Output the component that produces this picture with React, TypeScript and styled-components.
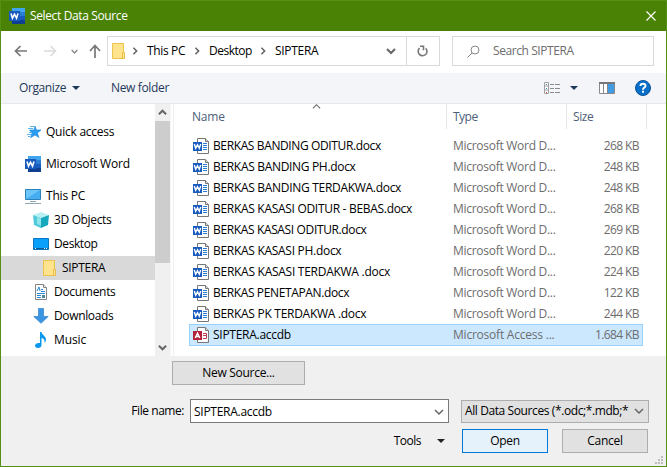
import React from "react";
import styled, { createGlobalStyle } from "styled-components";

const Global = createGlobalStyle`
  * { box-sizing: border-box; }
  html, body { margin: 0; padding: 0; overflow: hidden; }
  body { font: 12px/16px "Open Sans", "Noto Sans", sans-serif; color: #000; }
  svg { display: block; flex: none; }
`;

const Window = styled.div`
  width: 667px; height: 467px; display: flex; flex-direction: column;
  border: 1px solid #548f16; background: #fff; overflow: hidden;
`;
const TitleBar = styled.header`
  height: 30px; flex: none; display: flex; align-items: center; padding: 0 10px 0 8px;
  background: #4a8206; color: #fff;
`;
const Text = styled.span<{ $ls?: number; $x?: number }>`
  white-space: pre; letter-spacing: ${(p) => p.$ls ?? -0.3}px; margin-left: ${(p) => p.$x ?? 0}px;
`;
const Spacer = styled.div`flex: 1;`;
const NavBar = styled.div`
  height: 42px; flex: none; display: flex; align-items: center; padding: 0 12px 2px 13px;
`;
const NavArrows = styled.div`display: flex; align-items: center; width: 93px;`;
const AddressBox = styled.div`
  width: 333px; height: 30px; border: 1px solid #d9d9d9; display: flex; align-items: center; padding-left: 4px;
`;
const Crumb = styled.div<{ $w: number }>`
  display: flex; align-items: center; width: ${(p) => p.$w}px; flex: none;
`;
const Refresh = styled.div`
  width: 33px; height: 28px; border-left: 1px solid #d9d9d9; display: flex; align-items: center; justify-content: center;
`;
const SearchBox = styled.div`
  width: 202px; height: 30px; margin-left: 12px; border: 1px solid #d9d9d9; color: #6d6d6d;
  display: flex; align-items: center; padding-left: 14px;
`;
const Toolbar = styled.div`
  height: 31px; flex: none; display: flex; align-items: center; padding: 0 15px 0 18px;
  background: #f4f5f8; border-bottom: 1px solid #e8e8e9; color: #1e395b;
`;
const Main = styled.div`height: 252px; flex: none; display: flex;`;
const Tree = styled.nav`width: 154px; padding-top: 16px;`;
const TreeRow = styled.div<{ $indent: number; $gap?: number; $selected?: boolean }>`
  height: 24px; margin-bottom: ${(p) => p.$gap ?? 0}px; padding-left: ${(p) => p.$indent}px;
  display: flex; align-items: center; background: ${(p) => (p.$selected ? "#d9d9d9" : "transparent")};
`;
const ScrollBar = styled.div`
  width: 16px; background: #f0f0f0; display: flex; flex-direction: column; align-items: center;
  border-right: 1px solid #f6f6f6;
`;
const Thumb = styled.div`width: 15px; height: 142px; background: #cdcdcd;`;
const ScrollButton = styled.div`
  width: 15px; height: 17px; display: flex; align-items: center; justify-content: center;
`;
const List = styled.section`flex: 1; margin-left: 2px; border-left: 1px solid #f0f0f0; position: relative;`;
const ListHeader = styled.div`
  height: 25px; display: flex; color: #4c607a; padding-left: 15px;
`;
const HeadCell = styled.div<{ $w: number; $pad: number }>`
  width: ${(p) => p.$w}px; padding: 1px 0 0 ${(p) => p.$pad}px; border-right: 1px solid #e5e5e5;
  display: flex; align-items: center;
`;
const SortMark = styled.div`position: absolute; left: 138px; top: -2px;`;
const Rows = styled.div`padding: 6px 0 0 15px;`;
const FileRow = styled.div<{ $selected?: boolean }>`
  width: 454px; height: ${(p) => (p.$selected ? 22 : 21)}px; display: flex; align-items: center;
  border: 1px solid ${(p) => (p.$selected ? "#99d1ff" : "transparent")};
  background: ${(p) => (p.$selected ? "#cce8ff" : "transparent")}; padding-left: 3px;
`;
const NameCell = styled.div`width: 260px; display: flex; align-items: center;`;
const TypeCell = styled.div`width: 113px; color: #6d6d6d; display: flex;`;
const SizeCell = styled.div`width: 73px; color: #6d6d6d; display: flex; justify-content: flex-end;`;
const Footer = styled.footer`
  flex: 1; background: #f0f0f0; display: flex; flex-direction: column; padding: 5px 17px 0 0; position: relative;
`;
const Line = styled.div<{ $mt?: number }>`
  display: flex; align-items: center; justify-content: flex-end; margin-top: ${(p) => p.$mt ?? 0}px;
`;
const Button = styled.button<{ $w: number; $primary?: boolean }>`
  width: ${(p) => p.$w}px; height: 24px; padding: 0; font: inherit; color: #000; border-radius: 0;
  display: flex; align-items: center; justify-content: center;
  border: 1px solid ${(p) => (p.$primary ? "#0078d7" : "#adadad")};
  background: ${(p) => (p.$primary ? "#e5f1fb" : "#e1e1e1")};
`;
const NameField = styled.div`
  width: 259px; height: 24px; border: 1px solid #7a7a7a; background: #fff;
  display: flex; align-items: center; justify-content: space-between; padding: 1px 4px 0 3px; margin: 0 12px 0 6px;
`;
const TypeSelect = styled.div`
  width: 188px; height: 23px; border: 1px solid #adadad; background: #e1e1e1;
  display: flex; align-items: center; justify-content: space-between; padding: 0 4px 0 3px;
`;
const Grip = styled.div`position: absolute; right: 3px; bottom: 2px;`;

const WordIcon = () => (
  <svg width="16" height="16" viewBox="0 0 16 16">
    <path d="M3 0h13v4H3z" fill="#41a5ee" /><path d="M3 4h13v4H3z" fill="#2b7cd3" />
    <path d="M3 8h13v4H3z" fill="#185abd" /><path d="M3 12h13v4H3z" fill="#103f91" />
    <path d="M0 3h11v10H0z" fill="#185abd" />
    <path d="M2 5.500l1.500 4.700 2-4 2 4L9 5.500" fill="none" stroke="#fff" strokeWidth="1.600" />
  </svg>
);
const FolderIcon = () => (
  <svg width="13" height="16" viewBox="0 0 13 16">
    <path d="M.5.5h11v15H.5z" fill="#ffe48d" stroke="#ecc34c" />
    <path d="M10.500 9.500h2v6h-2z" fill="#ffe9a2" stroke="#e8bd43" />
  </svg>
);
const StarIcon = () => (
  <svg width="16" height="16" viewBox="0 0 16 16">
    <path d="M9 2l1.400 4H15l-3.600 3 1.500 4.500L9 11l-4.500 2.700L6 9 3.500 6H8z" fill="#2b9df0" stroke="#1583d8" strokeWidth=".6" />
    <path d="M4 2.500h4M2 4.500h5M3 8.500h3M1 10.500h4M2 12.500h2" stroke="#59b6ee" />
  </svg>
);
const PcIcon = () => (
  <svg width="16" height="16" viewBox="0 0 16 16">
    <path d="M.5 1.500h15v10H.5z" fill="#6cc5f8" stroke="#2d83b9" /><path d="M1 11L15 2v9z" fill="#45adf0" />
    <path d="M5 13.500h6M0 15.500h16" stroke="#91a6b3" />
  </svg>
);
const CubeIcon = () => (
  <svg width="16" height="16" viewBox="0 0 16 16">
    <path d="M0 3l8-3 8 3-8 3z" fill="#b8eff3" /><path d="M0 3l8 3v10l-7-3z" fill="#50c9d8" />
    <path d="M16 3L8 6v10l7-3z" fill="#16a8bd" /><path d="M4 5l4 1.500v7L4 12z" fill="#8fe4eb" />
  </svg>
);
const DesktopIcon = () => (
  <svg width="16" height="16" viewBox="0 0 16 16">
    <path d="M.5 2.500h15v11H.5z" fill="#08a0fb" stroke="#0876c2" />
    <path d="M1 12.500h14" stroke="#055b9c" /><path d="M2 12.500h1M11 12.500h1M13 12.500h1" stroke="#fff" />
  </svg>
);
const DocumentIcon = () => (
  <svg width="16" height="16" viewBox="0 0 16 16">
    <path d="M2.500.5h8l3 3v12h-11z" fill="#fff" stroke="#858585" /><path d="M10.500.5v3h3" fill="#eee" stroke="#858585" />
    <path d="M4 7l2-4 1 4M8 5.500h2M8 7.500h4M4 9.500h8M4 11.500h4M4 13.500h4" fill="none" stroke="#2688d7" />
    <path d="M9 11h3v3H9z" fill="#4c8a9a" />
  </svg>
);
const DownloadIcon = () => (
  <svg width="16" height="16" viewBox="0 0 16 16">
    <path d="M5.500.5h5v8h4.700L8 15.300.8 8.500h4.700z" fill="#3a96e3" stroke="#2b82cb" strokeWidth=".7" />
  </svg>
);
const MusicIcon = () => (
  <svg width="16" height="16" viewBox="0 0 16 16">
    <path d="M7 0h1.500c.3 3 4.500 4 4.500 7.500 0 1.500-.6 2.500-1.500 3.500.6-3-.8-4.500-3-5V13c0 2-1.500 3-3.500 3S2 15 2 13.600C2 12 4 10.500 7 11z" fill="#0a98ef" />
  </svg>
);
const FileIcon = ({ access }: { access?: boolean }) => (
  <svg width="16" height="16" viewBox="0 0 16 16">
    <path d="M4.500.5h8l3 3v12h-11z" fill="#fff" stroke="#777" /><path d="M12.500.5v3h3" fill="#ddd" stroke="#777" />
    {access ? (
      <path d="M10 6.500h3.500v5H10M10 8.500h3" fill="none" stroke="#c43a51" />
    ) : (
      <path d="M10 5.500h4M10 7.500h4M10 9.500h4M10 11.500h4" stroke="#2b7cd3" />
    )}
    <path d="M0 4h9v9H0z" fill={access ? "#b4213a" : "#185abd"} />
    {access ? (
      <path d="M2.200 11l2.300-4.800L6.800 11M3 9.500h3" fill="none" stroke="#fff" strokeWidth="1.400" />
    ) : (
      <path d="M1.300 6l1.400 4.200 1.800-3.500 1.800 3.500L7.700 6" fill="none" stroke="#fff" strokeWidth="1.400" />
    )}
  </svg>
);

type ChevronProps = { dir: "up" | "down" | "right"; size: number; color?: string; width?: number };
const chevrons = { up: "M0 5l4-4 4 4", down: "M0 1l4 4 4-4", right: "M1 0l4 4-4 4" };
const Chevron = ({ dir, size, color = "#666", width = 1.5 }: ChevronProps) => (
  <svg width={size} height={size} viewBox={dir === "right" ? "-1 -1 8 10" : "-1 -2 10 10"}>
    <path d={chevrons[dir]} fill="none" stroke={color} strokeWidth={width} />
  </svg>
);
const Caret = ({ color }: { color: string }) => (
  <svg width="8" height="4" viewBox="0 0 8 4"><path d="M0 0h8L4 4z" fill={color} /></svg>
);
const Arrow = ({ d, color }: { d: string; color: string }) => (
  <svg width="14" height="14" viewBox="0 0 14 14"><path d={d} fill="none" stroke={color} strokeWidth="1.700" /></svg>
);
const Gap = styled.div<{ $w: number }>`width: ${(p) => p.$w}px; flex: none;`;

const tree = [
  { label: "Quick access", icon: <StarIcon />, indent: 25, gap: 8, x: 4, ls: -0.25 },
  { label: "Microsoft Word", icon: <WordIcon />, indent: 24, gap: 8, x: 5, ls: -0.2 },
  { label: "This PC", icon: <PcIcon />, indent: 24, x: 5, ls: -0.2 },
  { label: "3D Objects", icon: <CubeIcon />, indent: 32, x: 5, ls: -0.35 },
  { label: "Desktop", icon: <DesktopIcon />, indent: 32, x: 5, ls: -0.4 },
  { label: "SIPTERA", icon: <FolderIcon />, indent: 42, x: 6, ls: -0.3, selected: true },
  { label: "Documents", icon: <DocumentIcon />, indent: 32, x: 5, ls: -0.3 },
  { label: "Downloads", icon: <DownloadIcon />, indent: 32, x: 5, ls: -0.35 },
  { label: "Music", icon: <MusicIcon />, indent: 32, x: 5, ls: -0.1 },
];
const files = [
  { name: "BERKAS BANDING ODITUR.docx", size: "268 KB", ls: -0.38 },
  { name: "BERKAS BANDING PH.docx", size: "248 KB", ls: -0.32 },
  { name: "BERKAS BANDING TERDAKWA.docx", size: "248 KB", ls: -0.3 },
  { name: "BERKAS KASASI ODITUR - BEBAS.docx", size: "268 KB", ls: -0.3 },
  { name: "BERKAS KASASI ODITUR.docx", size: "269 KB", ls: -0.36 },
  { name: "BERKAS KASASI PH.docx", size: "220 KB", ls: -0.29 },
  { name: "BERKAS KASASI TERDAKWA .docx", size: "224 KB", ls: -0.27 },
  { name: "BERKAS PENETAPAN.docx", size: "122 KB", ls: -0.37 },
  { name: "BERKAS PK TERDAKWA .docx", size: "244 KB", ls: -0.28 },
  { name: "SIPTERA.accdb", size: "1.684 KB", ls: -0.27, access: true },
];

export default function App() {
  return (
    <Window>
      <Global />
      <TitleBar>
        <WordIcon /><Text $x={5} $ls={-0.37}>Select Data Source</Text><Spacer />
        <svg width="10" height="10" viewBox="0 0 10 10"><path d="M.5.5l9 9M9.500.5l-9 9" stroke="#fff" strokeWidth="1.200" /></svg>
      </TitleBar>
      <NavBar>
        <NavArrows>
          <Arrow d="M13 7H1.500M6.500 2l-5 5 5 5" color="#777" /><Gap $w={16} />
          <Arrow d="M0 7h11.500M6.500 2l5 5-5 5" color="#dcdcdc" /><Gap $w={13} />
          <Chevron dir="down" size={7} color="#888" width={2} /><Gap $w={10} />
          <Arrow d="M7 14V1.500M2 7l5-5.500L12 7" color="#777" />
        </NavArrows>
        <AddressBox>
          <Crumb $w={35}><FolderIcon /><Gap $w={6} /><Chevron dir="right" size={8} width={2} /></Crumb>
          <Crumb $w={62}><Text $ls={-0.35}>This PC</Text><Spacer /><Chevron dir="right" size={8} width={2} /><Gap $w={8} /></Crumb>
          <Crumb $w={66}><Text $ls={-0.5}>Desktop</Text><Spacer /><Chevron dir="right" size={8} width={2} /><Gap $w={8} /></Crumb>
          <Text>SIPTERA</Text><Spacer />
          <Chevron dir="down" size={10} width={2} /><Gap $w={10} />
          <Refresh>
            <svg width="12" height="12" viewBox="0 0 12 12">
              <path d="M9.200 2.800A4.400 4.400 0 1 1 3 2.700M3.500.8H7v4" transform="translate(-.5 .5)" fill="none" stroke="#777" strokeWidth="1.600" />
            </svg>
          </Refresh>
        </AddressBox>
        <SearchBox>
          <svg width="13" height="13" viewBox="0 0 13 13">
            <circle cx="8" cy="5" r="4" fill="none" stroke="#888" /><path d="M5 8l-4.500 4.500" stroke="#888" />
          </svg>
          <Text $x={13} $ls={-0.42}>Search SIPTERA</Text>
        </SearchBox>
      </NavBar>
      <Toolbar>
        <Text $ls={-0.4}>Organize</Text><Gap $w={6} /><Caret color="#1e395b" /><Gap $w={31} /><Text $ls={-0.35}>New folder</Text><Spacer />
        <svg width="16" height="12" viewBox="0 0 16 12">
          <path d="M.5.5h4v11h-4zM.5 4h4M.5 8h4" fill="#fff" stroke="#a0a0a0" />
          <path d="M6 2.500h4M11 2.500h5M6 6.500h4M11 6.500h5M6 10.500h4M11 10.500h5" stroke="#8a8a8a" />
          <path d="M2 2.500h1M2 6.500h1" stroke="#3d93cf" /><path d="M2 10.500h1" stroke="#d33" />
        </svg>
        <Gap $w={10} /><Caret color="#1e395b" /><Gap $w={21} />
        <svg width="16" height="12" viewBox="0 0 16 12">
          <path d="M.5.500h15v11H.5zM4.500 1v10M8.500 1v10" fill="#fff" stroke="#888" /><path d="M0 1h16" stroke="#777" strokeWidth="2" />
          <path d="M9 2h6v9H9z" fill="#429ce3" />
        </svg>
        <Gap $w={20} />
        <svg width="16" height="16" viewBox="0 0 16 16">
          <circle cx="8" cy="8" r="7.500" fill="#0a6fc8" stroke="#07549b" />
          <path d="M5.500 6c0-3 5-3 5 0 0 1.600-2.500 1.600-2.500 3.700M8 10.800v2" fill="none" stroke="#fff" strokeWidth="1.900" />
        </svg>
      </Toolbar>
      <Main>
        <Tree>
          {tree.map((t) => (
            <TreeRow key={t.label} $indent={t.indent} $gap={t.gap} $selected={t.selected}>
              {t.icon}<Text $x={t.x} $ls={t.ls}>{t.label}</Text>
            </TreeRow>
          ))}
        </Tree>
        <ScrollBar>
          <ScrollButton><Chevron dir="up" size={9} width={2.2} /></ScrollButton><Thumb /><Spacer />
          <ScrollButton><Chevron dir="down" size={9} width={2.2} /></ScrollButton>
        </ScrollBar>
        <List>
          <SortMark><Chevron dir="up" size={9} width={1.2} /></SortMark>
          <ListHeader>
            <HeadCell $w={258} $pad={3}><Text $ls={-0.2}>Name</Text></HeadCell>
            <HeadCell $w={120} $pad={6}><Text $ls={-0.5}>Type</Text></HeadCell>
            <HeadCell $w={80} $pad={6}><Text $ls={-0.4}>Size</Text></HeadCell>
          </ListHeader>
          <Rows>
            {files.map((f) => (
              <FileRow key={f.name} $selected={f.access}>
                <NameCell><FileIcon access={f.access} /><Text $x={4} $ls={f.ls}>{f.name}</Text></NameCell>
                <TypeCell><Text $ls={f.access ? -0.22 : -0.28}>{f.access ? "Microsoft Access ..." : "Microsoft Word D..."}</Text></TypeCell>
                <SizeCell><Text $ls={-0.6}>{f.size}</Text></SizeCell>
              </FileRow>
            ))}
          </Rows>
        </List>
      </Main>
      <Footer>
        <Line><Button $w={133}><Text>New Source...</Text></Button><Gap $w={344} /></Line>
        <Line $mt={14}>
          <Text $ls={-0.45}>File name:</Text>
          <NameField><Text $ls={-0.27}>SIPTERA.accdb</Text><Chevron dir="down" size={10} /></NameField>
          <TypeSelect><Text $ls={-0.4}>All Data Sources (*.odc;*.mdb;*</Text><Chevron dir="down" size={10} /></TypeSelect>
        </Line>
        <Line $mt={6}>
          <Text $ls={-0.5}>Tools</Text><Gap $w={16} /><Caret color="#222" /><Gap $w={17} />
          <Button $w={86} $primary><Text>Open</Text></Button><Gap $w={14} /><Button $w={86}><Text>Cancel</Text></Button><Gap $w={1} />
        </Line>
        <Grip>
          <svg width="8" height="8" viewBox="0 0 8 8"><path d="M6 0h2v2H6zM3 3h2v2H3zM6 3h2v2H6zM0 6h2v2H0zM3 6h2v2H3zM6 6h2v2H6z" fill="#bdbdbd" /></svg>
        </Grip>
      </Footer>
    </Window>
  );
}
